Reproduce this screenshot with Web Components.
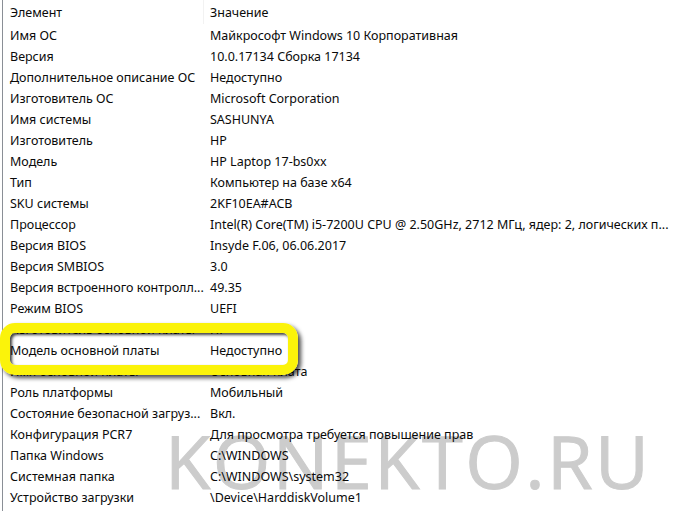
<!DOCTYPE html>
<html>
<head>
<meta charset="utf-8">
<style>
  html, body { margin: 0; background: #fff; height: 511px; overflow: hidden; }
</style>
</head>
<body>
<sys-info>
  <info-row slot="head" name="Элемент" value="Значение"></info-row>
  <info-row name="Имя ОС" value="Майкрософт Windows 10 Корпоративная"></info-row>
  <info-row name="Версия" value="10.0.17134 Сборка 17134"></info-row>
  <info-row name="Дополнительное описание ОС" value="Недоступно"></info-row>
  <info-row name="Изготовитель ОС" value="Microsoft Corporation"></info-row>
  <info-row name="Имя системы" value="SASHUNYA"></info-row>
  <info-row name="Изготовитель" value="HP"></info-row>
  <info-row name="Модель" value="HP Laptop 17-bs0xx"></info-row>
  <info-row name="Тип" value="Компьютер на базе x64"></info-row>
  <info-row name="SKU системы" value="2KF10EA#ACB"></info-row>
  <info-row name="Процессор" value="Intel(R) Core(TM) i5-7200U CPU @ 2.50GHz, 2712 МГц, ядер: 2, логических п..."></info-row>
  <info-row name="Версия BIOS" value="Insyde F.06, 06.06.2017"></info-row>
  <info-row name="Версия SMBIOS" value="3.0"></info-row>
  <info-row name="Версия встроенного контролл..." value="49.35"></info-row>
  <info-row name="Режим BIOS" value="UEFI"></info-row>
  <info-row name="Изготовитель основной платы" value="HP"></info-row>
  <info-row name="Модель основной платы" value="Недоступно"></info-row>
  <info-row name="Имя основной платы" value="Основная плата"></info-row>
  <info-row name="Роль платформы" value="Мобильный"></info-row>
  <info-row name="Состояние безопасной загруз..." value="Вкл."></info-row>
  <info-row name="Конфигурация PCR7" value="Для просмотра требуется повышение прав"></info-row>
  <info-row name="Папка Windows" value="C:\WINDOWS"></info-row>
  <info-row name="Системная папка" value="C:\WINDOWS\system32"></info-row>
  <info-row name="Устройство загрузки" value="\Device\HarddiskVolume1"></info-row>
</sys-info>
<row-marker></row-marker>
<site-mark>KONEKTO.RU</site-mark>

<script>
class InfoRow extends HTMLElement {
    constructor() {
        super();
        this.attachShadow({ mode: 'open' });
        const name = this.getAttribute('name') || '';
        const value = this.getAttribute('value') || '';
        this.shadowRoot.innerHTML = `
            <style>
                :host {
                    display: grid;
                    grid-template-columns: 200px 1fr;
                    height: 21px;
                    line-height: 21px;
                    white-space: nowrap;
                }
                :host([slot="head"]) { height: 25px; line-height: 25px; }
            </style>
            <span>${name}</span>
            <span>${value}</span>
        `;
    }
}

class SysInfo extends HTMLElement {
    constructor() {
        super();
        this.attachShadow({ mode: 'open' });
        this.shadowRoot.innerHTML = `
            <style>
                :host {
                    display: block;
                    position: relative;
                    z-index: 1;
                    height: 511px;
                    margin-left: 2px;
                    padding-left: 7px;
                    border-left: 1px solid #8a8f96;
                    font: 12.5px "Noto Sans", sans-serif;
                    color: #0a0a0a;
                }
                .head { position: relative; }
                .head::after {
                    content: "";
                    position: absolute;
                    left: 193px;
                    top: 0;
                    height: 24px;
                    border-left: 1px solid #f2f2f2;
                }
            </style>
            <div class="head"><slot name="head"></slot></div>
            <slot></slot>
        `;
    }
}

class RowMarker extends HTMLElement {
    constructor() {
        super();
        this.attachShadow({ mode: 'open' });
        this.shadowRoot.innerHTML = `
            <style>
                :host {
                    position: absolute;
                    z-index: 2;
                    left: 0;
                    top: 323px;
                    width: 278px;
                    height: 32px;
                    border: 10px solid #fbf30a;
                    border-radius: 15px;
                    box-shadow: 3px 3px 4px rgba(0,0,0,.7), inset 2px 2px 3px rgba(0,0,0,.75);
                }
            </style>
        `;
    }
}

class SiteMark extends HTMLElement {
    constructor() {
        super();
        this.attachShadow({ mode: 'open' });
        this.shadowRoot.innerHTML = `
            <style>
                :host {
                    position: absolute;
                    z-index: 0;
                    left: 165px;
                    top: 421px;
                    font: 74px/80px "Open Sans", sans-serif;
                    letter-spacing: 2.4px;
                    color: #cccccc;
                    -webkit-text-stroke: 1px #cccccc;
                    white-space: nowrap;
                }
            </style>
            <slot></slot>
        `;
    }
}

customElements.define('info-row', InfoRow);
customElements.define('sys-info', SysInfo);
customElements.define('row-marker', RowMarker);
customElements.define('site-mark', SiteMark);
</script>
</body>
</html>
